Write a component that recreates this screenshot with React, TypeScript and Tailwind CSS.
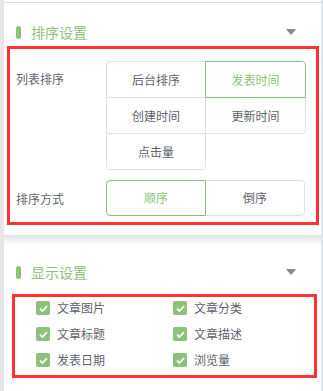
import { useState } from 'react';

const font = { fontFamily: '"Noto Sans CJK SC", "Noto Sans", sans-serif' };

function Caret() {
  return (
    <svg width="10" height="6" viewBox="0 0 10 6" className="shrink-0">
      <path d="M0 0 L10 0 L5 6 Z" fill="#8a8a8a" />
    </svg>
  );
}

function SectionTitle({ title }: { title: string }) {
  return (
    <div className="flex items-center h-[20px] pl-[12px] pr-[25px]">
      <span className="w-[5px] h-[13px] rounded-full bg-[#8cc17d]" />
      <span className="ml-[10px] text-[14px] text-[#8cc17d] leading-none">{title}</span>
      <span className="flex-1" />
      <Caret />
    </div>
  );
}

function CheckItem({ label }: { label: string }) {
  return (
    <div className="flex items-center h-[14px]">
      <span className="w-[14px] h-[14px] rounded-[2px] bg-[#8cc17d] flex items-center justify-center">
        <svg width="9" height="7" viewBox="0 0 9 7">
          <path d="M1 3.6 L3.4 6 L8 1.2" stroke="#fff" strokeWidth="1.8" fill="none" />
        </svg>
      </span>
      <span className="ml-[7px] text-[12px] text-[#5f6370] leading-none">{label}</span>
    </div>
  );
}

export default function App() {
  const [orderBy, setOrderBy] = useState('发表时间');
  const [direction, setDirection] = useState('顺序');

  const cells = [
    { label: '后台排序', round: 'rounded-tl-[4px]' },
    { label: '发表时间', round: 'rounded-tr-[4px]' },
    { label: '创建时间', round: '' },
    { label: '更新时间', round: 'rounded-br-[4px]' },
    { label: '点击量', round: 'rounded-b-[4px]' },
  ];

  return (
    <div className="w-[323px] h-[391px] bg-white flex overflow-hidden" style={font}>
      <div className="w-[4px] h-full bg-[#e6e6e6]" />
      <div className="flex-1 flex flex-col">
        <div className="mt-[2px] border-t border-[#dcdcdc] pt-[19px]">
          <SectionTitle title="排序设置" />
          <div className="mt-[4px] ml-[3px] mr-[2px] border-[3px] border-[#ff3333] pl-[6px] pt-[12px] pb-[6px]">
            <div className="flex">
              <div className="w-[90px] h-[36px] flex items-center text-[12px] text-[#5f6370]">列表排序</div>
              <div className="grid grid-cols-[100px_100px]">
                {cells.map((c, i) => {
                  const active = orderBy === c.label;
                  return (
                    <button
                      key={c.label}
                      onClick={() => setOrderBy(c.label)}
                      className={`h-[37px] border text-[12px] ${c.round} ${i % 2 === 1 ? '-ml-px' : ''} ${
                        i > 1 ? '-mt-px' : ''
                      } ${active ? 'relative z-10 border-[#8cc17d] text-[#8cc17d]' : 'border-[#dcdfe6] text-[#5f6370]'}`}
                    >
                      {c.label}
                    </button>
                  );
                })}
              </div>
            </div>
            <div className="flex mt-[10px]">
              <div className="w-[90px] h-[36px] flex items-center text-[12px] text-[#5f6370] pt-[2px]">排序方式</div>
              <div className="flex">
                {['顺序', '倒序'].map((d, i) => {
                  const active = direction === d;
                  return (
                    <button
                      key={d}
                      onClick={() => setDirection(d)}
                      className={`w-[100px] h-[36px] border text-[12px] ${
                        i === 0 ? 'rounded-l-[4px]' : '-ml-px rounded-r-[4px]'
                      } ${active ? 'relative z-10 border-[#8cc17d] text-[#8cc17d]' : 'border-[#dcdfe6] text-[#5f6370]'}`}
                    >
                      {d}
                    </button>
                  );
                })}
              </div>
            </div>
          </div>
          <div className="h-[10px]" />
        </div>
        <div className="h-[10px] bg-gradient-to-b from-[#e2e4e8] to-white" />
        <div className="pt-[17px]">
          <SectionTitle title="显示设置" />
          <div className="mt-[12px] ml-[8px] mr-[4px] border-[3px] border-[#ff3333] pl-[21px] pt-[4px] pb-[8px]">
            <div className="grid grid-cols-[137px_1fr] gap-y-[12px]">
              <CheckItem label="文章图片" />
              <CheckItem label="文章分类" />
              <CheckItem label="文章标题" />
              <CheckItem label="文章描述" />
              <CheckItem label="发表日期" />
              <CheckItem label="浏览量" />
            </div>
          </div>
        </div>
      </div>
      <div className="w-[2px] h-full bg-[#dfe5ee]" />
    </div>
  );
}
